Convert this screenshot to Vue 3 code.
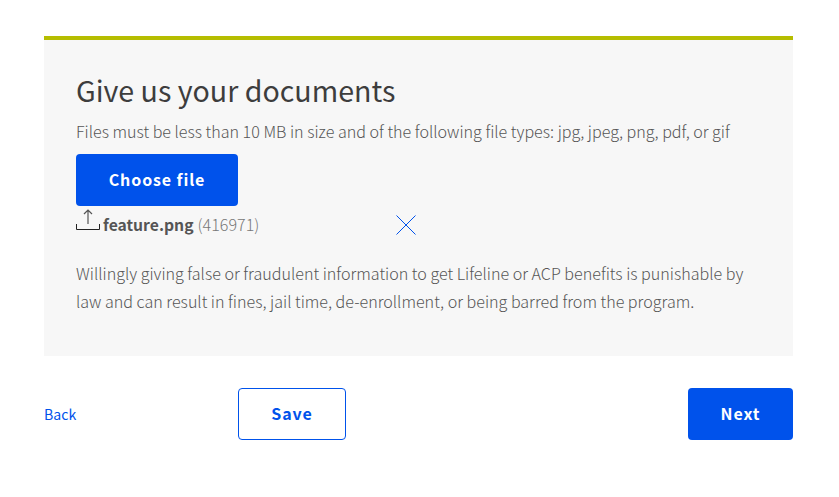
<script setup>
</script>
<template>
  <main class="page">
    <section class="panel">
      <h1>Give us your documents</h1>
      <p class="hint">Files must be less than 10 MB in size and of the following file types: jpg, jpeg, png, pdf, or gif</p>
      <button class="btn primary choose">Choose file</button>
      <div class="file">
        <svg class="upload" width="24" height="24" viewBox="0 0 24 24" fill="none">
          <path d="M0.5 16V21.5H23.5V16" stroke="#222" stroke-width="1"/>
          <path d="M12 16V2M8 6L12 2L16 6" stroke="#555" stroke-width="1.2"/>
        </svg>
        <span class="name">feature.png</span>
        <span class="size">(416971)</span>
        <svg class="close" width="20" height="20" viewBox="0 0 20 20" fill="none" stroke="#0052eb" stroke-width="1">
          <path d="M0.5 0.5L19.5 19.5M19.5 0.5L0.5 19.5"/>
        </svg>
      </div>
      <p class="legal">Willingly giving false or fraudulent information to get Lifeline or ACP benefits is punishable by law and can result in fines, jail time, de-enrollment, or being barred from the program.</p>
    </section>
    <footer class="actions">
      <a class="back">Back</a>
      <button class="btn outline">Save</button>
      <button class="btn primary next">Next</button>
    </footer>
  </main>
</template>
<style scoped>
.page { width: 749px; margin-left: 44px; padding-top: 36px; font-family: "Noto Sans CJK SC", "Noto Sans", sans-serif; font-weight: 300; }
.panel { background: #f7f7f7; border-top: 4px solid #b5bd00; height: 320px; padding: 0 32px; box-sizing: border-box; }
h1 { margin: 0; padding-top: 30px; font-size: 28.6px; line-height: 40px; font-weight: 400; color: #3d3d3d; }
.hint { margin: 9px 0 0; font-size: 16.1px; line-height: 24px; color: #555; white-space: nowrap; }
.btn { font-family: inherit; font-size: 16px; font-weight: 700; letter-spacing: 0.9px; border-radius: 4px; height: 52px; box-sizing: border-box; padding: 0 0 2px; }
.primary { background: #0052eb; color: #fff; border: 0; }
.choose { width: 162px; display: block; margin-top: 11px; }
.file { display: flex; align-items: center; height: 36px; position: relative; font-size: 16.1px; }
.upload { margin-right: 3px; margin-top: -8px; }
.name { font-weight: 700; font-size: 15.7px; color: #555; }
.size { color: #777; margin-left: 4px; }
.close { position: absolute; left: 320px; top: 9px; }
.legal { margin: 17px 0 0; width: 680px; font-size: 16.1px; line-height: 28px; color: #555; }
.actions { display: flex; align-items: center; margin-top: 32px; }
.back { width: 194px; font-size: 14.1px; font-weight: 400; color: #0052eb; }
.outline { width: 108px; background: #fff; color: #0052eb; border: 1px solid #0052eb; }
.next { width: 105px; margin-left: auto; }
</style>
